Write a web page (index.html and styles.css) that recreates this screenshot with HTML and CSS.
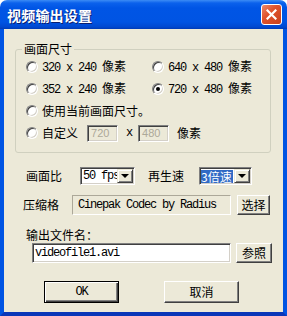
FILE: index.html
```
<!DOCTYPE html>
<html lang="zh-CN">
<head>
  <meta charset="UTF-8">
  <meta name="viewport" content="width=device-width, initial-scale=1.0">
  <title>视频输出设置</title>
  <link rel="stylesheet" href="styles.css">
</head>
<body>
  <div class="window">
    <div class="titlebar">
      <span class="title">视频输出设置</span>
      <span class="close">
        <svg width="11" height="11" viewBox="0 0 11 11">
          <path d="M1.5 1.5 L9.5 9.5 M9.5 1.5 L1.5 9.5" stroke="#fff" stroke-width="2.2" stroke-linecap="square" fill="none"/>
        </svg>
      </span>
    </div>
    <div class="frame">
      <fieldset class="group">
        <legend>画面尺寸</legend>
        <div class="radio-grid">
          <label class="opt"><span class="radio"></span><span><span class="mono">320 x 240 </span>像素</span></label>
          <label class="opt"><span class="radio"></span><span><span class="mono">640 x 480 </span>像素</span></label>
          <label class="opt"><span class="radio"></span><span><span class="mono">352 x 240 </span>像素</span></label>
          <label class="opt"><span class="radio checked"></span><span><span class="mono">720 x 480 </span>像素</span></label>
          <label class="opt wide"><span class="radio"></span>使用当前画面尺寸。</label>
          <div class="opt wide">
            <span class="radio"></span>自定义
            <span class="field disabled size-w">720</span>
            <span class="mono by">x</span>
            <span class="field disabled size-h">480</span>
            <span class="unit">像素</span>
          </div>
        </div>
      </fieldset>

      <div class="row rate-row">
        <span class="lbl">画面比</span>
        <span class="select fps"><span class="value mono">50 fps</span><span class="drop"><i></i></span></span>
        <span class="lbl speed-lbl">再生速</span>
        <span class="select speed"><span class="value"><span class="sel">3倍速</span></span><span class="drop"><i></i></span></span>
      </div>

      <div class="row codec-row">
        <span class="lbl">压缩格</span>
        <span class="codec mono">Cinepak Codec by Radius</span>
        <span class="btn small">选择</span>
      </div>

      <div class="file-lbl">输出文件名：</div>

      <div class="row file-row">
        <span class="field file mono">videofile1.avi</span>
        <span class="btn browse">参照</span>
      </div>

      <div class="row actions">
        <span class="btn wide-btn default"><span class="mono">OK</span></span>
        <span class="btn wide-btn">取消</span>
      </div>
    </div>
  </div>
</body>
</html>
```

FILE: styles.css
```
body {
  margin: 0;
  font-family: "Noto Sans CJK SC", "Liberation Sans", sans-serif;
  font-size: 12px;
  color: #000;
  background: #fff;
}
.window {
  width: 287px;
  height: 316px;
  display: flex;
  flex-direction: column;
}
.titlebar {
  height: 29px;
  flex: none;
  display: flex;
  align-items: center;
  justify-content: space-between;
  padding: 0 5px 0 7px;
  box-sizing: border-box;
  border-radius: 7px 7px 0 0;
  background: linear-gradient(#3c8cf5 0, #0b61ec 3px, #0055e5 8px, #0054e3 22px, #0048d0 27px, #003ab5 29px);
}
.title {
  color: #fff;
  font-size: 14px;
  font-weight: 700;
  line-height: 16px;
  letter-spacing: 0.2px;
  text-shadow: 1px 1px #0a1f70;
  padding-top: 1px;
}
.close {
  width: 19px;
  height: 19px;
  border: 1px solid #fff;
  border-radius: 3px;
  background: linear-gradient(135deg, #ec8a6c 0, #e0532d 40%, #c8401c 100%);
  display: flex;
  align-items: center;
  justify-content: center;
}
.frame {
  flex: 1;
  background: #ece9d8;
  border: 4px solid #0054e3;
  border-top: none;
  border-bottom-color: #0a36b8;
}
.mono {
  font-family: "Liberation Mono", "DejaVu Sans Mono", monospace;
  font-size: 12px;
  letter-spacing: -1.2px;
  white-space: pre;
}
.group {
  margin: 13px 0 0 11px;
  width: 256px;
  box-sizing: border-box;
  padding: 0 0 8px 10px;
  border: 1px solid #d0d0bf;
  border-radius: 3px;
}
.group legend {
  margin-left: -4px;
  padding: 0 2px;
  line-height: 14px;
}
.radio-grid {
  display: grid;
  grid-template-columns: 126px 1fr;
  grid-auto-rows: 22px;
}
.opt {
  display: flex;
  align-items: center;
  white-space: nowrap;
  line-height: 14px;
}
.opt.wide {
  grid-column: 1 / 3;
}
.radio {
  width: 12px;
  height: 12px;
  flex: none;
  box-sizing: border-box;
  border-radius: 50%;
  border: 1px solid;
  border-color: #808080 #fff #fff #808080;
  box-shadow: inset 1px 1px #404040, inset -1px -1px #d4d0c8;
  background: #fff;
  margin-right: 4px;
  display: flex;
  align-items: center;
  justify-content: center;
}
.radio.checked::after {
  content: "";
  width: 4px;
  height: 4px;
  border-radius: 50%;
  background: #000;
}
.field {
  box-sizing: border-box;
  border: 1px solid;
  border-color: #808080 #fff #fff #808080;
  box-shadow: inset 1px 1px #404040, inset -1px -1px #d4d0c8;
  background: #fff;
  display: flex;
  align-items: center;
}
.field.disabled {
  background: #ece9d8;
  color: #aca899;
  font-family: "Liberation Sans", sans-serif;
  font-size: 11px;
  height: 17px;
  width: 31px;
  padding-left: 3px;
}
.size-w {
  margin-left: 9px;
}
.by {
  margin: 0 0 0 8px;
  width: 12px;
}
.unit {
  margin-left: 8px;
}
.row {
  display: flex;
  align-items: center;
}
.lbl {
  line-height: 14px;
  white-space: nowrap;
}
.rate-row {
  margin-top: 14px;
  height: 18px;
  padding-left: 22px;
}
.select {
  box-sizing: border-box;
  height: 18px;
  border: 1px solid;
  border-color: #808080 #fff #fff #808080;
  box-shadow: inset 1px 1px #404040, inset -1px -1px #d4d0c8;
  background: #fff;
  display: flex;
  align-items: center;
  padding: 1px;
}
.select .value {
  flex: 1;
  min-width: 0;
  display: flex;
  align-items: center;
  height: 100%;
  white-space: nowrap;
}
.fps {
  width: 55px;
  margin-left: 18px;
}
.fps .value {
  padding-left: 1px;
}
.speed-lbl {
  margin-left: 13px;
}
.speed {
  width: 53px;
  margin-left: 15px;
}
.sel {
  background: #316ac5;
  color: #fff;
  line-height: 13px;
  padding: 0 1px 0 0;
}
.drop {
  width: 16px;
  height: 14px;
  flex: none;
  box-sizing: border-box;
  background: #ece9d8;
  border: 1px solid;
  border-color: #ece9d8 #404040 #404040 #ece9d8;
  box-shadow: inset 1px 1px #fff, inset -1px -1px #808080;
  display: flex;
  align-items: center;
  justify-content: center;
}
.drop i {
  width: 0;
  height: 0;
  border-left: 4px solid transparent;
  border-right: 4px solid transparent;
  border-top: 4px solid #000;
}
.codec-row {
  margin-top: 9px;
  padding-left: 19px;
  height: 21px;
}
.codec {
  margin-left: 13px;
  width: 159px;
  height: 20px;
  box-sizing: border-box;
  border: 1px solid;
  border-color: #aca899 #fff #fff #aca899;
  padding-left: 5px;
  display: flex;
  align-items: center;
  white-space: nowrap;
  overflow: hidden;
}
.btn {
  box-sizing: border-box;
  background: #ece9d8;
  border: 1px solid;
  border-color: #fff #404040 #404040 #fff;
  box-shadow: inset -1px -1px #808080;
  display: flex;
  align-items: center;
  justify-content: center;
  line-height: 14px;
  white-space: nowrap;
}
.btn.small {
  margin-left: 6px;
  width: 33px;
  height: 20px;
}
.file-lbl {
  margin: 13px 0 0 22px;
  line-height: 14px;
}
.file-row {
  margin-top: 1px;
  padding-left: 28px;
  height: 20px;
}
.field.file {
  width: 199px;
  height: 20px;
  padding-left: 2px;
}
.btn.browse {
  margin-left: 5px;
  width: 36px;
  height: 20px;
}
.actions {
  margin-top: 18px;
  padding-left: 40px;
  gap: 45px;
}
.wide-btn {
  width: 75px;
  height: 22px;
}
.btn.default {
  border-color: #000;
  box-shadow: inset 1px 1px #fff, inset -1px -1px #404040, inset -2px -2px #808080;
}
```
